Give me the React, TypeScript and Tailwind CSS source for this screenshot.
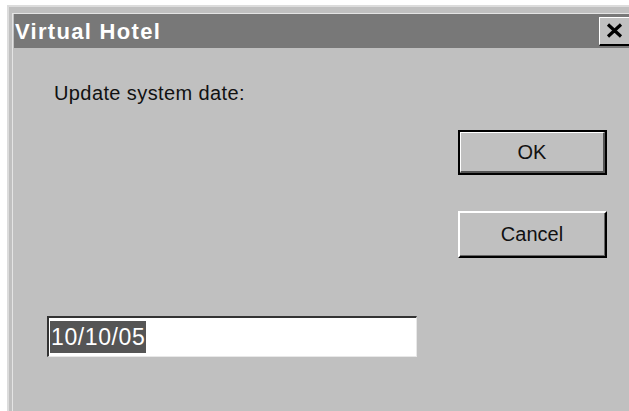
// Win9x style "update date" prompt
export default function App() {
  return (
    <div className="h-[411px] w-[629px] overflow-hidden bg-white pl-[7px] pt-[5px]" style={{ fontFamily: '"Liberation Sans", Arial, sans-serif' }}>
      <div className="h-[420px] w-[640px] border-l-2 border-t-2 border-l-[#dcdcdc] border-t-[#dcdcdc] bg-[#c0c0c0] pl-[3px] pt-[6px]">
        <div className="h-[402px] border-l border-t border-[#e4e4e4] pl-[1px] pt-0">
          {/* title bar */}
          <div className="flex h-[34px] items-center justify-between bg-[#787878] pl-[1px] pr-[16px]">
            <span className="text-[22px] font-bold tracking-[1.3px] text-white">Virtual Hotel</span>
            <button className="flex h-[29px] w-[32px] items-center justify-center border-b-2 border-r-2 border-l border-t border-b-black border-r-black border-l-white border-t-white bg-[#c0c0c0]">
              <svg width="17" height="15" viewBox="0 0 17 15">
                <path d="M2 1.5 L15 13.5 M15 1.5 L2 13.5" stroke="black" strokeWidth="3.2" />
              </svg>
            </button>
          </div>

          <div className="flex">
            <div className="flex w-[434px] flex-col pl-[40px]">
              <p className="mt-[33px] text-[20px] leading-[24px] tracking-[0.4px] text-[#111]">Update system date:</p>
              <div className="ml-[-7px] mt-[211px] flex h-[41px] w-[370px] items-center border-l-2 border-t-2 border-b border-r border-l-[#333] border-t-[#333] border-b-[#e8e8e8] border-r-[#e8e8e8] bg-white pl-[1px]">
                <span className="bg-[#555] px-[1px] text-[23px] leading-[32px] tracking-[0.6px] text-white">10/10/05</span>
              </div>
            </div>
            <div className="flex flex-col gap-[36px] pl-[10px] pt-[82px]">
              <button className="h-[45px] w-[149px] border-2 border-black bg-[#c0c0c0] p-0">
                <span className="flex h-full w-full items-center justify-center border-b-2 border-r-2 border-l border-t border-b-[#555] border-r-[#555] border-l-white border-t-white text-[20px] text-[#111]">
                  OK
                </span>
              </button>
              <button className="h-[47px] w-[149px] border-b-2 border-r-2 border-l-2 border-t-2 border-b-black border-r-black border-l-white border-t-white bg-[#c0c0c0]">
                <span className="flex h-full w-full items-center justify-center border-b border-r border-b-[#666] border-r-[#666] text-[20px] text-[#111]">
                  Cancel
                </span>
              </button>
            </div>
          </div>
        </div>
      </div>
    </div>
  );
}
